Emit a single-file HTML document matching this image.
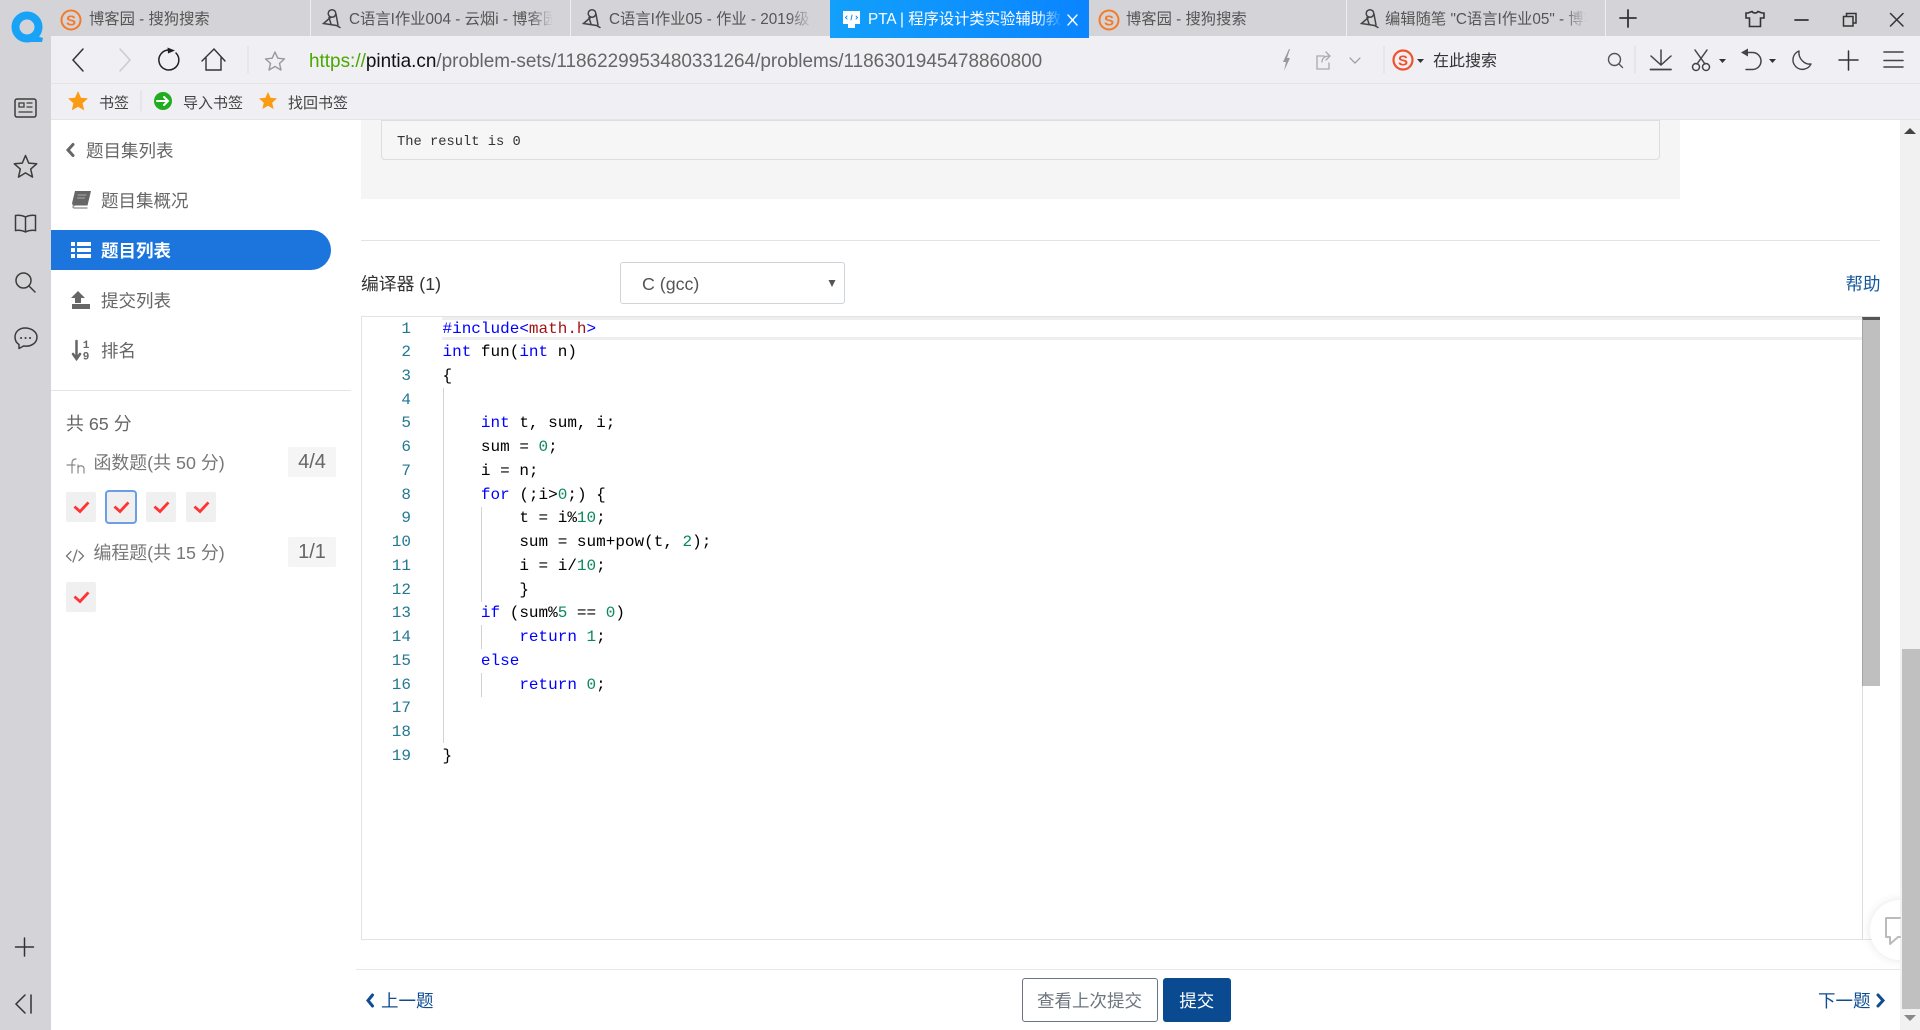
<!DOCTYPE html>
<html lang="zh-CN"><head><meta charset="utf-8"><title>PTA</title>
<style>
*{box-sizing:border-box;margin:0;padding:0}
html,body{width:1920px;height:1030px;overflow:hidden;background:#fff;font-family:"Liberation Sans","Noto Sans CJK SC",sans-serif}
.a{position:absolute}
.t{position:absolute;white-space:nowrap;line-height:24px;height:24px}
.tab{font-size:15.3px;color:#555;overflow:hidden;top:8px}
.fade{-webkit-mask-image:linear-gradient(90deg,#000 88%,transparent);mask-image:linear-gradient(90deg,#000 88%,transparent)}
.bm{font-size:15px;color:#444;top:92px}
.nav{font-size:17.5px;color:#666}
.box{position:absolute;width:30px;height:30px;background:#f0f0f0;border-radius:2px}
.badge{position:absolute;left:288px;width:48px;height:30px;background:#f5f5f5;border-radius:2px;text-align:center;line-height:30px;font-size:20px;color:#666}
pre{font-family:"Liberation Mono","DejaVu Sans Mono",monospace;}
.code{position:absolute;font-size:16px;line-height:23.74px;color:#000}
.k{color:#00f}.n{color:#09885a}.s{color:#a31515}
</style></head><body>
<!-- chrome backgrounds -->
<div class="a" style="left:0;top:0;width:1920px;height:36px;background:#d4d4d8"></div>
<div class="a" style="left:0;top:0;width:51px;height:1030px;background:#d4d4d8"></div>
<div class="a" style="left:51px;top:36px;width:1869px;height:83px;background:#efeff4"></div>
<div class="a" style="left:51px;top:83px;width:1869px;height:1px;background:#e3e3e8"></div>
<div class="a" style="left:51px;top:119px;width:1869px;height:1px;background:#e3e3e8"></div>
<div class="a" style="left:830px;top:0;width:259px;height:38px;background:linear-gradient(90deg,#12a0fb,#0a84ff)"></div>
<div class="a" style="left:310px;top:0;width:1px;height:36px;background:#eeeef1"></div>
<div class="a" style="left:570px;top:0;width:1px;height:36px;background:#eeeef1"></div>
<div class="a" style="left:1346px;top:0;width:1px;height:36px;background:#eeeef1"></div>
<div class="a" style="left:1605px;top:0;width:1px;height:36px;background:#eeeef1"></div>
<!-- tabs -->
<div class="t tab" style="left:89px;width:200px">博客园 - 搜狗搜索</div>
<div class="t tab fade" style="left:349px;width:204px">C语言I作业004 - 云烟i - 博客园</div>
<div class="t tab fade" style="left:609px;width:204px">C语言I作业05 - 作业 - 2019级</div>
<div class="t tab fade" style="left:868px;width:194px;color:#fff">PTA | 程序设计类实验辅助教学平台</div>
<div class="t tab" style="left:1126px;width:200px">博客园 - 搜狗搜索</div>
<div class="t tab fade" style="left:1385px;width:202px">编辑随笔 "C语言I作业05" - 博客园</div>
<!-- url -->
<div class="t" style="left:309px;top:50px;font-size:18.95px;color:#666"><span style="color:#4ba800">https://</span><span style="color:#111">pintia.cn</span>/problem-sets/1186229953480331264/problems/1186301945478860800</div>
<div class="t" style="left:1433px;top:49.500px;font-size:16px;color:#333">在此搜索</div>
<!-- bookmarks -->
<div class="t bm" style="left:99px">书签</div>
<div class="t bm" style="left:183px">导入书签</div>
<div class="t bm" style="left:288px">找回书签</div>
<!-- left nav -->
<div class="a" style="left:51px;top:230px;width:280px;height:40px;background:#1b75dc;border-radius:0 20px 20px 0"></div>
<div class="t nav" style="left:86px;top:139px">题目集列表</div>
<div class="t nav" style="left:101px;top:189px">题目集概况</div>
<div class="t nav" style="left:101px;top:239px;color:#fff;font-weight:bold">题目列表</div>
<div class="t nav" style="left:101px;top:289px">提交列表</div>
<div class="t nav" style="left:101px;top:339px">排名</div>
<div class="a" style="left:51px;top:390px;width:300px;height:1px;background:#e5e5e5"></div>
<div class="t nav" style="left:66px;top:412px;font-size:17.9px">共 65 分</div>
<div class="t nav" style="left:93.500px;top:451px;color:#777;font-size:17.9px">函数题(共 50 分)</div>
<div class="t nav" style="left:93.500px;top:541px;color:#777;font-size:17.9px">编程题(共 15 分)</div>
<div class="badge" style="top:447px">4/4</div>
<div class="badge" style="top:537px">1/1</div>
<div class="box" style="left:66px;top:492px"></div>
<div class="box" style="left:105px;top:490px;width:32px;height:34px;background:#f0f0f0;border:2px solid #6a9fe6;border-radius:4px"></div>
<div class="box" style="left:146px;top:492px"></div>
<div class="box" style="left:186px;top:492px"></div>
<div class="box" style="left:66px;top:582px"></div>
<!-- output box -->
<div class="a" style="left:361px;top:120px;width:1319px;height:79px;background:#f5f5f5"></div>
<div class="a" style="left:381px;top:120px;width:1279px;height:40px;border:1px solid #ddd;border-radius:0 0 4px 4px;background:#f6f6f6"></div>
<pre class="t" style="left:397px;top:131px;font-size:13.75px;color:#333">The result is 0</pre>
<div class="a" style="left:361px;top:240px;width:1519px;height:1px;background:#e3e3e3"></div>
<!-- compiler -->
<div class="t" style="left:361px;top:272px;font-size:17.8px;color:#333">编译器 (1)</div>
<div class="a" style="left:620px;top:262px;width:225px;height:42px;border:1px solid #ced4da;border-radius:3px;background:#fff"></div>
<div class="t" style="left:642px;top:272px;font-size:17.8px;color:#555">C (gcc)</div>
<div class="t" style="left:1845.500px;top:272px;font-size:17.500px;color:#14599f">帮助</div>
<!-- editor -->
<div class="a" style="left:361px;top:316px;width:1519px;height:624px;border:1px solid #e3e3e3;border-width:1px 0 1px 1px"></div>
<div class="a" style="left:442px;top:317px;width:1435px;height:23px;border:solid #eee;border-width:3px 0"></div>
<div class="a" style="left:1862px;top:317px;width:18px;height:369px;background:#bfbfbf;border-top:3px solid #555;border-left:1px solid #a5a5a5"></div>
<div class="a" style="left:1862px;top:686px;width:1px;height:253px;background:#dcdcdc"></div>
<div class="a" style="left:443px;top:388px;width:1px;height:355px;background:#d3d3d3"></div>
<div class="a" style="left:481px;top:507px;width:1px;height:95px;background:#d3d3d3"></div>
<div class="a" style="left:481px;top:625px;width:1px;height:24px;background:#d3d3d3"></div>
<div class="a" style="left:481px;top:673px;width:1px;height:24px;background:#d3d3d3"></div>
<pre class="code" style="left:370px;top:317.500px;width:41px;text-align:right;color:#237893">1
2
3
4
5
6
7
8
9
10
11
12
13
14
15
16
17
18
19</pre>
<pre class="code" style="left:442.500px;top:317.500px"><span class="k">#include&lt;</span><span class="s">math.h</span><span class="k">&gt;</span>
<span class="k">int</span> fun(<span class="k">int</span> n)
{

    <span class="k">int</span> t, sum, i;
    sum = <span class="n">0</span>;
    i = n;
    <span class="k">for</span> (;i&gt;<span class="n">0</span>;) {
        t = i%<span class="n">10</span>;
        sum = sum+pow(t, <span class="n">2</span>);
        i = i/<span class="n">10</span>;
        }
    <span class="k">if</span> (sum%<span class="n">5</span> == <span class="n">0</span>)
        <span class="k">return</span> <span class="n">1</span>;
    <span class="k">else</span>
        <span class="k">return</span> <span class="n">0</span>;


}</pre>
<!-- bottom bar -->
<div class="a" style="left:356px;top:969px;width:1544px;height:1px;background:#e8e8e8;box-shadow:0 -2px 4px rgba(0,0,0,.04)"></div>
<div class="t" style="left:381px;top:989px;font-size:17.5px;color:#0f4c92">上一题</div>
<div class="t" style="left:1818px;top:989px;font-size:17.5px;color:#0f4c92">下一题</div>
<div class="a" style="left:1021.500px;top:978px;width:136px;height:44px;border:1px solid #6c757d;border-radius:3px;background:#fff;text-align:center;line-height:44px;font-size:17.5px;color:#6c757d">查看上次提交</div>
<div class="a" style="left:1163px;top:978px;width:67.500px;height:44px;border-radius:3px;background:#0a4a90;text-align:center;line-height:46px;font-size:17.5px;color:#fff">提交</div>
<!-- float button + page scrollbar -->
<div class="a" style="left:1870px;top:900px;width:60px;height:60px;border-radius:50%;background:#fff;box-shadow:0 0 10px rgba(0,0,0,.1)"></div>
<div class="a" style="left:1900px;top:120px;width:20px;height:910px;background:#f1f1f1"></div>
<div class="a" style="left:1902px;top:649px;width:18px;height:360px;background:#c0c0c0"></div>
<!-- icons -->
<svg class="a" style="left:0;top:0" width="1920" height="1030" viewBox="0 0 1920 1030" fill="none" stroke-linecap="round">
<!-- Q logo -->
<circle cx="27" cy="27" r="11.500" stroke="#18a3f7" stroke-width="8"/>
<path d="M30 34 L43 38 L42 42 L30 42Z" fill="#18a3f7"/>
<!-- S logos -->
<g font-family="Liberation Sans" font-weight="bold" font-size="15" text-anchor="middle">
<circle cx="71" cy="20" r="9.500" stroke="#f47a28" stroke-width="2"/><text x="71" y="25.500" fill="#f47a28">S</text>
<circle cx="1109" cy="20" r="9.500" stroke="#f47a28" stroke-width="2"/><text x="1109" y="25.500" fill="#f47a28">S</text>
<circle cx="1403" cy="60" r="9.500" stroke="#f0522a" stroke-width="2.200"/><text x="1403" y="65.500" fill="#f0522a">S</text>
</g>
<!-- bird icons -->
<g stroke="#444" stroke-width="1.500">
<g id="bird"><circle cx="332" cy="13.500" r="3.800"/><path d="M331 17L323.500 23.500L336.500 25.500L340 27.500M336 14L338 25M329 17.500L331 24"/></g>
<g transform="translate(260 0)"><circle cx="332" cy="13.500" r="3.800"/><path d="M331 17L323.500 23.500L336.500 25.500L340 27.500M336 14L338 25M329 17.500L331 24"/></g>
<g transform="translate(1038 0)"><circle cx="332" cy="13.500" r="3.800"/><path d="M331 17L323.500 23.500L336.500 25.500L340 27.500M336 14L338 25M329 17.500L331 24"/></g>
</g>
<!-- active tab icon -->
<path d="M843 11h17v13h-5v4h-7v-4h-5z" fill="#fff"/><path d="M847 16l-1.500 1.500 1.500 1.500M856 16l1.500 1.500-1.500 1.500M852 15l-1 5" stroke="#1c8ff5"/>
<path d="M1068 15l9 10M1077 15l-9 10" stroke="#fff" stroke-width="1.400"/>
<!-- window controls -->
<g stroke="#333" stroke-width="1.500">
<path d="M1620 18h16M1628 10v17" stroke-width="1.800"/>
<path d="M1748 13l4-1.500c1.500 2 4.500 2 6 0l4 1.500 2 0v5h-3.500v8.500h-11v-8.500h-3.500v-5z" stroke-width="1.600"/>
<path d="M1795 20h13" stroke-width="1.700"/>
<path d="M1843.500 16.500h9.500v9.500h-9.500zM1846.500 16.500v-3h9.500v9.500h-3"/>
<path d="M1890.500 13.500l12.500 12.500M1903 13.500l-12.500 12.500"/>
</g>
<!-- toolbar left -->
<path d="M83 49L73 60L83 71" stroke="#333" stroke-width="1.500"/>
<path d="M120 49L130 60L120 71" stroke="#ccc" stroke-width="1.500"/>
<path d="M176 53a10 10 0 1 1-7-3" stroke="#222" stroke-width="1.500"/><path d="M167.500 47.500L175 50.500L168 53.500z" fill="#222"/>
<path d="M202 61L214 49L225 61M206 58V70H221V58" stroke="#333" stroke-width="1.400"/>
<path d="M248 46v27" stroke="#ddd"/>
<path d="M275 52l2.800 6.200 6.700.7-5 4.500 1.500 6.600-6-3.500-6 3.500 1.500-6.600-5-4.500 6.700-.7z" stroke="#999" stroke-width="1.400" stroke-linejoin="round"/>
<!-- toolbar right -->
<path d="M1289 49l-6 13h3l-2 9 6-13h-3l3-9z" fill="#999"/>
<path d="M1324 56h-7v13h12v-6M1322 62c0-4 3-6 7-6M1326 52l4 4-4 4" stroke="#aaa" stroke-width="1.300"/>
<path d="M1350 58l5 5 5-5" stroke="#999" stroke-width="1.200"/>
<path d="M1384 46v27" stroke="#ddd"/>
<path d="M1417 59h7l-3.500 4z" fill="#333"/>
<circle cx="1614.500" cy="59.500" r="6" stroke="#555" stroke-width="1.400"/><path d="M1619 64l3.500 3.500" stroke="#555" stroke-width="1.400"/>
<path d="M1635 46v27" stroke="#ddd"/>
<g stroke="#444" stroke-width="1.500">
<path d="M1661 50v15M1651 56l10 9 10-9"/><path d="M1650.500 69.500h20.500" stroke-width="1.800"/>
<circle cx="1696" cy="67" r="3.500"/><circle cx="1706" cy="67" r="3.500"/><path d="M1697 64l10-14M1705 64l-10-14"/>
<path d="M1746 52.500h6.500a8.500 8.500 0 0 1 0 17h-6.500"/>
</g>
<path d="M1741 52.500l7-4v8z" fill="#444"/>
<path d="M1719 59h7l-3.500 4zM1769 59h7l-3.500 4z" fill="#333"/>
<path d="M1799 51a9.500 9.500 0 1 0 12 13c-6 1-13-5-12-13z" stroke="#444" stroke-width="1.400" stroke-linejoin="round"/>
<path d="M1839 60h19M1848.500 51v19" stroke="#333" stroke-width="1.500"/>
<path d="M1884 52h19M1884 60.500h19M1884 67h19" stroke="#444" stroke-width="1.600"/>
<!-- bookmarks -->
<path d="M78 91l3 6.700 7 .7-5.400 4.800 1.600 7.200-6.200-3.700-6.200 3.700 1.600-7.200-5.400-4.800 7-.7z" fill="#fb9b12"/>
<path d="M141 91v20" stroke="#ddd"/>
<circle cx="163" cy="101" r="9" fill="#20ad1f"/><path d="M157 101h11M164 97l4 4-4 4" stroke="#fff" stroke-width="2"/>
<path d="M268 92l2.600 5.800 6.400.6-4.800 4.300 1.400 6.300-5.600-3.300-5.600 3.300 1.400-6.300-4.800-4.300 6.400-.6z" fill="#fb9b12"/>
<!-- left strip icons -->
<g stroke="#3c3c3c" stroke-width="1.500">
<rect x="15" y="99" width="21" height="18" rx="2"/><path d="M19 103h5v4h-5zM27 103h5M27 107h5M19 112h13" stroke-width="1.300"/>
<path d="M25.500 155.500l3.200 7.600 8 .7-6 5.300 1.800 8-7-4.200-7 4.200 1.800-8-6-5.300 8-.7z" stroke-linejoin="round"/>
<path d="M25.500 217c-3-1.500-6.500-2-10-1.500v15c3.500-.5 7 0 10 1.500 3-1.500 6.500-2 10-1.500v-15c-3.500-.5-7 0-10 1.500zM25.500 217v15"/>
<circle cx="23.500" cy="280.500" r="7.500"/><path d="M29 286l6 6"/>
<path d="M25 328c-6 0-10 4-10 9 0 3 1.500 6 4 7.500v4l4.500-2.500c7 1 13.500-2.500 13.500-9 0-5-5.500-9-12-9z" stroke-linejoin="round"/>
<path d="M21 338h.1M25.500 338h.1M30 338h.1" stroke-width="2"/>
<path d="M15.500 947h18M24.500 938v18" stroke="#333"/>
<path d="M25 995l-9 9 9 9M31 995v18" stroke="#333"/>
</g>
<!-- nav icons -->
<path d="M73 144.500l-5 5.500 5 5.500" stroke="#666" stroke-width="3"/>
<path d="M75 191h16l-3.500 14.500H75c-2.500 0-3-1-2.800-3z" fill="#666"/>
<path d="M74.500 205.500c-2 0-2 2.500 0 2.500H87" stroke="#888" stroke-width="1.200"/><path d="M78 195h8M77.500 198h7" stroke="#aaa" stroke-width="1"/>
<path d="M71 243h4v4h-4zM71 249h4v4h-4zM71 255h4v4h-4zM77 243h14v4H77zM77 249h14v4H77zM77 255h14v4H77z" fill="#fff" transform="translate(0 -1)"/>
<path d="M78 291l7 7h-4v5h-6v-5h-4zM72 304h18v5H72z" fill="#666"/>
<path d="M76.500 341v17M73 354l3.500 5 3.500-5" stroke="#666" stroke-width="2.500"/>
<text x="86" y="348" font-family="Liberation Mono" font-size="11" font-weight="bold" fill="#666" text-anchor="middle">1</text>
<text x="86" y="359.500" font-family="Liberation Mono" font-size="11" font-weight="bold" fill="#666" text-anchor="middle">9</text>
<!-- fn / code -->
<path d="M72 473V463c0-3 2-4 4-4M67 465h8M78 465V473M78 468c1-3 6-3 6 1v4" stroke="#888" stroke-width="1.200"/>
<path d="M71 551.500L66.500 556L71 560.500M77 550L73 562M79 551.500L83.500 556L79 560.500" stroke="#777" stroke-width="1.300"/>
<!-- checks -->
<g stroke="#f33" stroke-width="2.800" stroke-linecap="square" stroke-linejoin="miter">
<path d="M75.500 507.500l4.500 4 7.500-8"/><path d="M115.500 507.500l4.500 4 7.500-8"/><path d="M155.500 507.500l4.500 4 7.500-8"/><path d="M195.500 507.500l4.500 4 7.500-8"/><path d="M75.500 597.500l4.500 4 7.500-8"/>
</g>
<!-- select arrow -->
<path d="M828.500 280h7l-3.500 7z" fill="#555"/>
<!-- prev / next chevrons -->
<path d="M372.500 995l-4.500 5.500 4.500 5.500" stroke="#0f4c92" stroke-width="3"/>
<path d="M1878 995l5 5.500-5 5.500" stroke="#0f4c92" stroke-width="3"/>
<!-- float comment -->
<path d="M1900 918h-14v19h4v7l8-7h2" stroke="#bbb" stroke-width="2" stroke-linejoin="round"/>
<!-- scroll arrows -->
<path d="M1904 134l6-6 6 6z" fill="#444"/>
<path d="M1904 1015l6 6 6-6z" fill="#888"/>
</svg>
</body></html>
